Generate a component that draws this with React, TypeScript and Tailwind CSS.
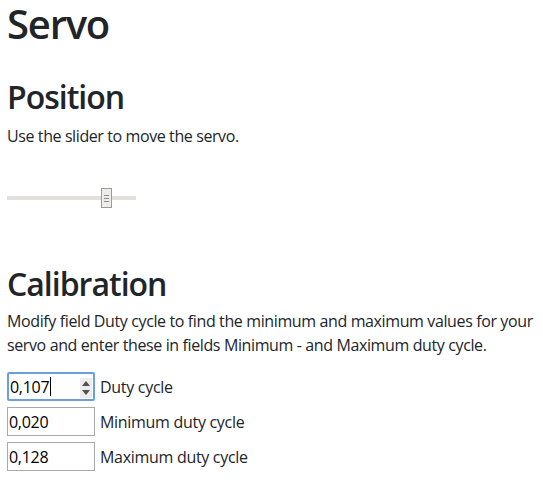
import React from "react";

function Field({ value, label, focused }: { value: string; label: string; focused?: boolean }) {
  return (
    <div className="flex items-center h-[29px] mb-[6px]">
      <div
        className={
          "relative w-[88px] h-[29px] box-border flex items-center pl-[1px] " +
          (focused ? "border-[2px] border-[#6aa0e0] rounded-[2px]" : "border border-[#a9a9a9]")
        }
      >
        <span className="text-[16px] leading-none text-black tracking-[-0.3px]">{value}</span>
        {focused && <span className="inline-block w-[1px] h-[19px] bg-black ml-[1px]" />}
        {focused && (
          <div className="absolute right-[1px] top-[4px] w-[12px] h-[20px] bg-[#ececec] flex flex-col items-center justify-center gap-[4px]">
            <svg width="8" height="5" viewBox="0 0 8 5"><path d="M4 0 L8 5 L0 5 Z" fill="#505050" /></svg>
            <svg width="8" height="5" viewBox="0 0 8 5"><path d="M0 0 L8 0 L4 5 Z" fill="#505050" /></svg>
          </div>
        )}
      </div>
      <span className="ml-[5px] text-[16px] leading-[24px] tracking-[-0.3px]">{label}</span>
    </div>
  );
}

export default function App() {
  return (
    <div className="pl-[7px] font-['Open_Sans',sans-serif] text-[#212529] bg-white min-h-[480px]">
      <h1 className="text-[40px] leading-[48px] font-semibold tracking-[-1.2px]">Servo</h1>
      <h2 className="mt-[30px] text-[32px] leading-[38px] font-semibold tracking-[-1px]">Position</h2>
      <p className="mt-[8px] text-[16px] leading-[24px] tracking-[-0.4px]">Use the slider to move the servo.</p>
      <div className="mt-[40px] relative w-[129px] h-[20px] flex items-center">
        <div className="w-full h-[4px] bg-[#e3e0dc]" />
        <div className="absolute left-[94px] top-0 w-[11px] h-[20px] border border-[#9a9a9a] bg-[#eeece9] flex flex-col items-center justify-center gap-[2px]">
          <div className="w-[5px] h-[1px] bg-[#8a8a8a]" />
          <div className="w-[5px] h-[1px] bg-[#8a8a8a]" />
          <div className="w-[5px] h-[1px] bg-[#8a8a8a]" />
        </div>
      </div>
      <h2 className="mt-[57px] text-[32px] leading-[38px] font-semibold tracking-[-1px]">Calibration</h2>
      <p className="mt-[6px] pr-[4px] text-[16px] leading-[24px] tracking-[-0.38px]">
        Modify field Duty cycle to find the minimum and maximum values for your servo and enter these in fields Minimum - and Maximum duty cycle.
      </p>
      <div className="mt-[15px]">
        <Field value="0,107" label="Duty cycle" focused />
        <Field value="0,020" label="Minimum duty cycle" />
        <Field value="0,128" label="Maximum duty cycle" />
      </div>
    </div>
  );
}
